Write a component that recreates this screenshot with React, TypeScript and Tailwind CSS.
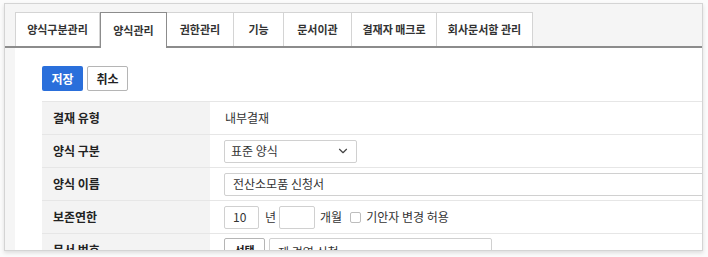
import { ChevronDown } from "lucide-react";

const tabs = [
  { label: "양식구분관리", w: "w-[85px]" },
  { label: "양식관리", w: "w-[67px]", active: true },
  { label: "권한관리", w: "w-[67px]" },
  { label: "기능", w: "w-[50px]" },
  { label: "문서이관", w: "w-[68px]" },
  { label: "결재자 매크로", w: "w-[85px]" },
  { label: "회사문서함 관리", w: "w-[96px]" },
];

function Row({ label, children }: { label: string; children: React.ReactNode }) {
  return (
    <div className="flex h-[33px] border-b border-[#e6e6e6]">
      <div className="flex w-[168px] shrink-0 items-center bg-[#f3f3f3] pl-[11px] text-[12px] font-bold text-[#222]">
        {label}
      </div>
      <div className="flex flex-1 items-center gap-[6px] pl-[14px] text-[12px] text-[#333]">{children}</div>
    </div>
  );
}

export default function App() {
  return (
    <div
      className="h-[257px] w-[708px] overflow-hidden bg-[#fbfbfb] pl-[4px] pt-[3px]"
      style={{ fontFamily: '"Noto Sans CJK KR", "Noto Sans", sans-serif' }}
    >
      <div className="h-[248px] w-[699px] overflow-hidden border border-[#d4d4d4] bg-[#f5f5f5] shadow-[0_2px_4px_rgba(0,0,0,0.12)]">
        <div className="flex h-[44px] items-end border-b-2 border-[#8c8c8c] pl-[10px] pt-[9px]">
          {tabs.map((t) => (
            <div
              key={t.label}
              className={
                t.active
                  ? `${t.w} relative -mb-[2px] flex h-[36px] items-center justify-center border border-b-0 border-[#8c8c8c] bg-white text-[11px] font-semibold text-[#333]`
                  : `${t.w} flex h-[34px] items-center justify-center border border-b-0 border-l-0 border-[#d4d4d4] bg-white text-[11px] font-semibold text-[#333] first:border-l`
              }
            >
              {t.label}
            </div>
          ))}
        </div>
        <div className="ml-[10px] h-full bg-white pl-[27px] pt-[18px]">
          <div className="flex gap-[4px]">
            <button className="h-[25px] w-[41px] rounded-[2px] bg-[#2a6fdb] text-[12px] font-bold text-white">저장</button>
            <button className="h-[25px] w-[41px] rounded-[2px] border border-[#b5b5b5] bg-white text-[12px] font-bold text-[#222]">
              취소
            </button>
          </div>
          <div className="mt-[10px] border-t border-[#e6e6e6]">
            <Row label="결재 유형">
              <span className="pl-[1px]">내부결재</span>
            </Row>
            <Row label="양식 구분">
              <div className="flex h-[23px] w-[133px] items-center justify-between rounded-[2px] border border-[#d0d0d0] pl-[6px] pr-[6px]">
                <span>표준 양식</span>
                <ChevronDown size={14} strokeWidth={2} className="text-[#444]" />
              </div>
            </Row>
            <Row label="양식 이름">
              <div className="flex h-[23px] w-[500px] items-center rounded-[2px] border border-[#d0d0d0] pl-[8px]">전산소모품 신청서</div>
            </Row>
            <Row label="보존연한">
              <div className="flex h-[23px] w-[35px] items-center rounded-[2px] border border-[#d0d0d0] pl-[8px]">10</div>
              <span>년</span>
              <div className="-ml-[3px] h-[23px] w-[36px] rounded-[2px] border border-[#d0d0d0]" />
              <span className="ml-[-1px]">개월</span>
              <span className="ml-[2px] inline-block h-[11px] w-[11px] rounded-[2px] border border-[#bdbdbd]" />
              <span className="-ml-[1px]">기안자 변경 허용</span>
            </Row>
            <Row label="문서 번호">
              <button className="mt-[4px] flex h-[24px] w-[41px] items-start justify-center self-start rounded-[2px] border border-[#b5b5b5] bg-white pt-[3px] text-[11px] font-bold text-[#222]">
                선택
              </button>
              <div className="-ml-[2px] mt-[4px] flex h-[24px] w-[223px] items-start self-start rounded-[2px] border border-[#d0d0d0] pl-[8px] pt-[4px]">
                제 경영 신청 -
              </div>
            </Row>
          </div>
        </div>
      </div>
    </div>
  );
}
